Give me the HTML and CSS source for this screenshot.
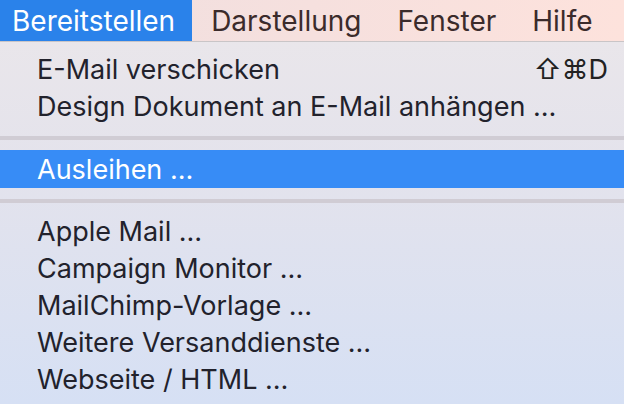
FILE: index.html
```html
<!DOCTYPE html>
<html lang="de">
<head>
<meta charset="utf-8">
<link rel="stylesheet" href="styles.css">
</head>
<body>
<div class="menubar">
  <div class="mb-item active">Bereitstellen</div>
  <div class="mb-item">Darstellung</div>
  <div class="mb-item">Fenster</div>
  <div class="mb-item">Hilfe</div>
</div>
<div class="menu">
  <div class="row"><span>E-Mail verschicken</span><span class="key">⇧⌘D</span></div>
  <div class="row"><span>Design Dokument an E-Mail anhängen …</span></div>
  <div class="sep"></div>
  <div class="row selected"><span>Ausleihen …</span></div>
  <div class="sep"></div>
  <div class="row"><span>Apple Mail …</span></div>
  <div class="row"><span>Campaign Monitor …</span></div>
  <div class="row"><span>MailChimp-Vorlage …</span></div>
  <div class="row"><span>Weitere Versanddienste …</span></div>
  <div class="row"><span>Webseite / HTML …</span></div>
</div>
</body>
</html>
```
FILE: styles.css
```css
html, body {
  margin: 0;
  padding: 0;
  width: 624px;
  height: 404px;
  overflow: hidden;
  font-family: "Inter", "Liberation Sans", sans-serif;
}
body {
  background: linear-gradient(180deg, #ebe7ea 0%, #e4e3ec 40%, #d6e0f4 100%);
}
.menubar {
  display: flex;
  height: 41px;
  border-bottom: 1px solid #c9c5c7;
  background: linear-gradient(90deg, #efdfe0 0%, #f6e0de 50%, #fde2dc 100%);
  font-size: 28px;
  color: #3b2b2b;
}
.mb-item {
  display: flex;
  align-items: center;
  padding: 0 17px 0 19px;
}
.mb-item.active {
  padding-left: 12px;
  background: #2a82ea;
  color: #ffffff;
}
.menu {
  padding-top: 9px;
  font-size: 27px;
  color: #22222c;
}
.row {
  display: flex;
  justify-content: space-between;
  align-items: center;
  height: 37px;
  padding: 0 16px 0 37px;
}
.row.selected {
  height: 38px;
  background: #378cf6;
  color: #ffffff;
}
.key {
  color: #222;
}
.sep {
  height: 25px;
  display: flex;
  align-items: center;
}
.sep::before {
  content: "";
  display: block;
  width: 100%;
  height: 4px;
  background: #d0ccd4;
}
```
